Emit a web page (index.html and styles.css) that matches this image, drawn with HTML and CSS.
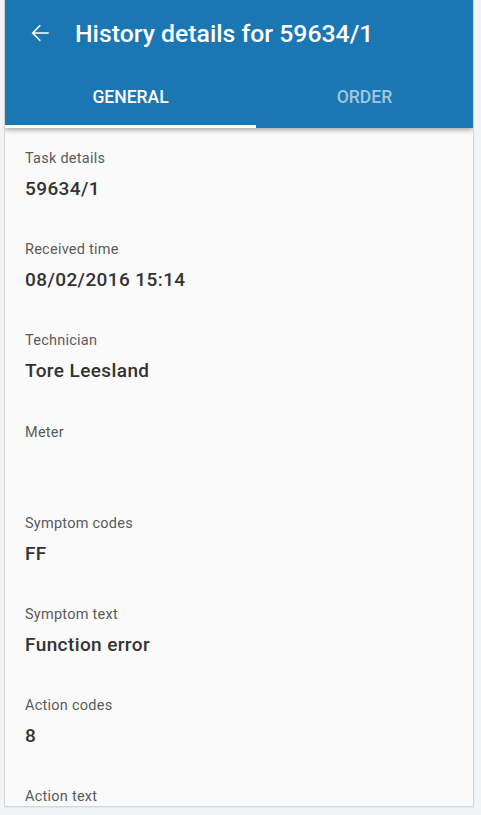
FILE: index.html
```html
<!DOCTYPE html>
<html lang="en">
<head>
  <meta charset="UTF-8">
  <meta name="viewport" content="width=device-width, initial-scale=1.0">
  <title>History details</title>
  <link rel="stylesheet" href="styles.css">
</head>
<body>
  <div class="screen">
    <header class="appbar">
      <div class="toolbar">
        <svg class="back" width="26" height="26" viewBox="0 0 24 24">
          <path d="M20 11.3H6.9l5.9-5.9-1-1L4.2 12l7.6 7.6 1-1-5.9-5.9H20v-1.4z" fill="#fff"/>
        </svg>
        <h1 class="title">History details for 59634/1</h1>
      </div>
      <nav class="tabs">
        <div class="tab active">General</div>
        <div class="tab">Order</div>
      </nav>
    </header>

    <main class="details">
      <div class="field">
        <div class="label">Task details</div>
        <div class="value">59634/1</div>
      </div>
      <div class="field">
        <div class="label">Received time</div>
        <div class="value">08/02/2016 15:14</div>
      </div>
      <div class="field">
        <div class="label">Technician</div>
        <div class="value">Tore Leesland</div>
      </div>
      <div class="field">
        <div class="label">Meter</div>
        <div class="value"></div>
      </div>
      <div class="field">
        <div class="label">Symptom codes</div>
        <div class="value">FF</div>
      </div>
      <div class="field">
        <div class="label">Symptom text</div>
        <div class="value">Function error</div>
      </div>
      <div class="field">
        <div class="label">Action codes</div>
        <div class="value">8</div>
      </div>
      <div class="field">
        <div class="label">Action text</div>
        <div class="value"></div>
      </div>
    </main>
  </div>
</body>
</html>
```

FILE: styles.css
```css
html, body {
  margin: 0;
  height: 100%;
}
body {
  font-family: Roboto, "Noto Sans", sans-serif;
  background-color: #f2f5f8;
  overflow: hidden;
}
.screen {
  width: 468px;
  height: 806px;
  margin-left: 5px;
  background-color: #fafafa;
  box-shadow: 0 0 0 1px #d4d6d8, 0 1px 2px rgba(0, 0, 0, 0.15);
  display: flex;
  flex-direction: column;
  overflow: hidden;
}
.appbar {
  background-color: #1a77b3;
  box-shadow: 0 2px 5px rgba(0, 0, 0, 0.35);
  position: relative;
  z-index: 1;
}
.toolbar {
  height: 66px;
  display: flex;
  align-items: center;
  padding-left: 22px;
}
.back {
  width: 26px;
  height: 26px;
}
.title {
  margin: 0 0 0 22px;
  font-size: 24.8px;
  font-weight: 500;
  color: #fff;
}
.tabs {
  display: flex;
  height: 62px;
}
.tab {
  flex: 1;
  display: flex;
  align-items: center;
  justify-content: center;
  padding-top: 2px;
  box-sizing: border-box;
  font-size: 17.5px;
  font-weight: 500;
  text-transform: uppercase;
  color: rgba(255, 255, 255, 0.6);
  border-bottom: 3px solid transparent;
}
.tab.active {
  flex: 0 0 251px;
  color: #fff;
  border-bottom-color: #fff;
}
.details {
  padding: 23px 20px 0;
}
.field {
  height: 91.2px;
}
.label {
  font-size: 14.5px;
  letter-spacing: 0.25px;
  color: #5a5a5a;
  line-height: 16px;
}
.value {
  margin-top: 11px;
  font-size: 19px;
  font-weight: 500;
  letter-spacing: 0.4px;
  color: #333;
  line-height: 22px;
}
```
